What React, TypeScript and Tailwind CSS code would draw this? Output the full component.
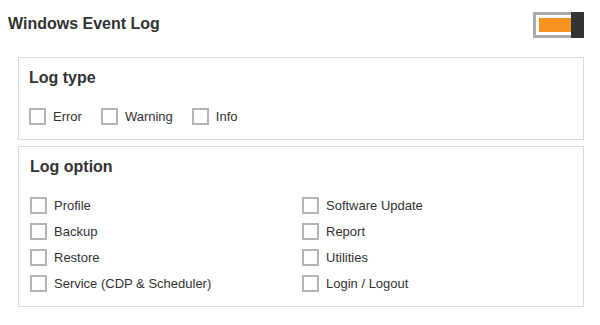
const logTypes = ["Error", "Warning", "Info"];

const leftOptions = ["Profile", "Backup", "Restore", "Service (CDP & Scheduler)"];
const rightOptions = ["Software Update", "Report", "Utilities", "Login / Logout"];

function Checkbox({ label }: { label: string }) {
  return (
    <label className="flex items-center gap-[7px] text-[13px] leading-[16px] text-[#333]">
      <span className="h-[17px] w-[17px] shrink-0 border-2 border-[#b5b5b5] bg-white" />
      <span>{label}</span>
    </label>
  );
}

function Toggle() {
  return (
    <div className="relative h-[26px] w-[51px] border-[3px] border-[#ababab] bg-white p-[3px]">
      <div className="h-full w-[32px] bg-[#f7931e]" />
      <div className="absolute -right-[3px] -top-[3px] -bottom-[3px] w-[13px] bg-[#333]" />
    </div>
  );
}

export default function App() {
  return (
    <div
      className="h-[325px] w-[600px] bg-white text-[#333]"
      style={{ fontFamily: '"Liberation Sans", Arial, sans-serif' }}
    >
      <div className="flex h-[38px] items-start justify-between pl-[8px] pr-[16px] pt-[12px]">
        <h1 className="mt-[2px] text-[16px] font-bold leading-[20px]">Windows Event Log</h1>
        <Toggle />
      </div>

      <div className="ml-[18px] mr-[16px] mt-[19px] flex flex-col gap-[6px]">
        <section className="border border-[#dcdcdc] px-[10px] pb-[14px] pt-[10px]">
          <h2 className="text-[16px] font-bold leading-[20px]">Log type</h2>
          <div className="mt-[20px] flex gap-[19px]">
            {logTypes.map((t) => (
              <Checkbox key={t} label={t} />
            ))}
          </div>
        </section>

        <section className="border border-[#dcdcdc] px-[11px] pb-[14px] pt-[10px]">
          <h2 className="text-[16px] font-bold leading-[20px]">Log option</h2>
          <div className="mt-[20px] flex">
            <div className="flex w-[272px] flex-col gap-[9px]">
              {leftOptions.map((o) => (
                <Checkbox key={o} label={o} />
              ))}
            </div>
            <div className="flex flex-col gap-[9px]">
              {rightOptions.map((o) => (
                <Checkbox key={o} label={o} />
              ))}
            </div>
          </div>
        </section>
      </div>
    </div>
  );
}
